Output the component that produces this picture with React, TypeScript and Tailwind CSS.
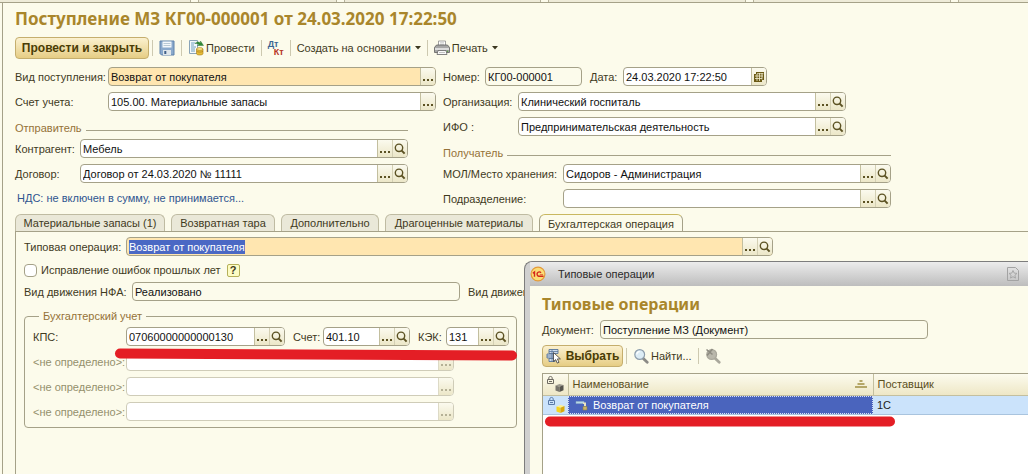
import React, { useEffect, useRef } from "react";
import clsx from "clsx";

function LensIcon() {
  return (
    <svg viewBox="0 0 12 12" className="size-3" fill="none" aria-hidden="true">
      <circle cx="5" cy="4.8" r="3.7" stroke="#5c5223" strokeWidth="1.4" />
      <path d="M7.7 7.6 10.6 10.6" stroke="#5c5223" strokeWidth="2" />
    </svg>
  );
}

function CalendarIcon() {
  return (
    <svg viewBox="0 0 12 12" className="size-3" aria-hidden="true">
      <path d="M3 1h8v8H9v2H1V3h2z" fill="#6b5a14" />
      <path d="M2 5h8M2 7.5h7M4 2.7h6.4M4 3v7M6.5 2v8M9 2v6.5" stroke="#f4efd0" strokeWidth=".8" />
    </svg>
  );
}

function SaveIcon() {
  return (
    <svg viewBox="0 0 16 16" className="size-4" aria-hidden="true">
      <path d="M1 1h14v14H2.5L1 13.5z" fill="#8aa9cc" stroke="#5f82ab" />
      <path d="M3.5 1.5h9v6h-9z" fill="#f4f8fb" />
      <path d="M4.5 3.5h7M4.5 5.5h7" stroke="#a9bccc" strokeWidth=".8" />
      <path d="M4 10h8v5H4z" fill="#dfe6ea" />
      <path d="M5.3 11h2v3h-2z" fill="#3f5f88" />
    </svg>
  );
}

function PostIcon() {
  return (
    <svg viewBox="0 0 16 16" className="size-4" aria-hidden="true">
      <path d="M1.5.5h8v13h-8z" fill="#f5f9fb" stroke="#8aa4b8" />
      <path d="M3 3h4M3 5h3M3 7h5M3 9h4M3 11h4" stroke="#6fa0bf" />
      <path d="M7 3.5c2-2 4-2 5.500-.5V1l3 4.500H9.500L11 4.200c-1.200-.8-2.500-.9-4-.7z" fill="#2f8a35" stroke="#1f6c28" strokeWidth=".4" />
      <path d="M8.500 9v4.500c0 1 1.300 1.500 3.200 1.500s3.300-.5 3.300-1.500V9z" fill="#e7bd3a" stroke="#a87d14" strokeWidth=".6" />
      <ellipse cx="11.750" cy="9" rx="3.200" ry="1.400" fill="#f9e48c" stroke="#a87d14" strokeWidth=".6" />
      <path d="M8.500 11.200c1 1.200 5.500 1.200 6.500 0" fill="none" stroke="#a87d14" strokeWidth=".7" />
    </svg>
  );
}

function PrinterIcon() {
  return (
    <svg viewBox="0 0 16 16" className="size-4" aria-hidden="true">
      <path d="M4.500 1h7v5h-7z" fill="#fff" stroke="#8b8b8b" strokeWidth=".8" />
      <path d="M6 2.800h4M6 4.300h4" stroke="#b2b2b2" strokeWidth=".7" />
      <path d="M2.500 5h11l2 2.500v5h-15v-5z" fill="#a6a6a6" stroke="#5f5f5f" strokeWidth=".8" />
      <path d="M1 8h14v2H1z" fill="#dcdcdc" />
      <path d="M4 10.500h8l1 4H3z" fill="#fafafa" stroke="#666" strokeWidth=".8" />
      <path d="M5 12.500h6" stroke="#aaa" strokeWidth=".7" />
      <circle cx="13.500" cy="11.200" r=".7" fill="#58a33d" />
    </svg>
  );
}

function PickIcon() {
  return (
    <svg viewBox="0 0 16 16" className="size-4" aria-hidden="true">
      <path d="M3 1.500h9v4H3zM1 6h8v4H1zM3 10.500h6v3H3z" fill="#cfdded" stroke="#58759a" strokeWidth=".9" />
      <path d="M3 3.500h9M1 8h8M6 1.500v12" stroke="#58759a" strokeWidth=".8" />
      <path d="M7.500 4.500v9l2.200-1.900 1.600 3.500 1.700-.8-1.600-3.400h3z" fill="#fff" stroke="#3a3a3a" strokeWidth=".8" />
    </svg>
  );
}

function FindIcon({ off = false }: { off?: boolean }) {
  return (
    <svg viewBox="0 0 16 16" className="size-4" aria-hidden="true">
      <path d="m10 10.300 4.200 4" stroke={off ? "#aaa89c" : "#8b8a86"} strokeWidth="2.800" strokeLinecap="round" />
      <circle cx="6.700" cy="6.500" r="4.900" fill={off ? "#b9b7ab" : "#dcecf5"} stroke={off ? "#aaa89c" : "#8d9dab"} strokeWidth="1.200" />
      {off ? (
        <path d="m1.500 1.500 6 5M7.500 1 2 7.500" stroke="#8e8c82" strokeWidth="1.600" />
      ) : (
        <path d="M3.800 6.500c0-1.800 1.200-2.900 2.900-2.900" fill="none" stroke="#fff" strokeWidth="1.200" />
      )}
    </svg>
  );
}

function LogoIcon() {
  return (
    <svg viewBox="0 0 16 16" className="size-4" aria-hidden="true">
      <circle cx="8" cy="8" r="6.900" fill="#fbdc75" stroke="#e39a3a" strokeWidth="1.200" />
      <path d="M2.800 7.300 4.500 6v4.800M11 6.700a2.200 2.200 0 1 0-2.200 3.500H13.500" fill="none" stroke="#d4261c" strokeWidth="1.400" />
      <path d="M9.800 8.600H13" stroke="#d4261c" strokeWidth=".6" />
    </svg>
  );
}

function LockCubeIcon({ active = false }: { active?: boolean }) {
  const body = active ? "#f5d31f" : "#77746c";
  const side = active ? "#d9a90d" : "#55534d";
  const lock = active ? "#5b7ba8" : "#6e6b62";
  return (
    <svg viewBox="0 0 18 18" className="size-[18px]" fill="none" aria-hidden="true">
      <path d="M1.500 4.500h6v4h-6z" stroke={lock} />
      <path d="M2.800 4.500V2.800c0-1.800 3.400-1.800 3.400 0v1.700M3 6.500h3" stroke={lock} />
      <path d="m9.500 10.500 4-1.500 4 1-4 1.700z" fill={active ? "#fff08a" : "#9b988e"} />
      <path d="m9.500 10.500 4 1.200V17l-4-1.500z" fill={body} />
      <path d="m17.500 10-4 1.700V17l4-1.700z" fill={side} />
    </svg>
  );
}

function ItemIcon() {
  return (
    <svg viewBox="0 0 14 12" className="h-3 w-3.5 shrink-0" aria-hidden="true">
      <path d="M1 2.500h8v2H1z" fill="#b9d9e6" stroke="#8fb0c4" strokeWidth=".5" />
      <path d="M8 3.500h3v4H9V5H8z" fill="#e8e3c0" />
      <path d="M8 7.500h4V11H8z" fill="#c9b469" stroke="#8a7f4a" strokeWidth=".6" />
    </svg>
  );
}

function FavoriteIcon() {
  return (
    <svg viewBox="0 0 14 14" className="size-3.5" fill="none" aria-hidden="true">
      <path d="M1.500.5h8l3 3v10h-11z" stroke="#a3a3a3" />
      <path d="m7 3.500 1.200 2.600 2.800.3-2.100 1.900.6 2.800L7 9.700l-2.500 1.400.6-2.800L3 6.400l2.800-.3z" stroke="#a3a3a3" strokeWidth=".9" />
    </svg>
  );
}

type FieldProps = {
  id: string;
  label: string;
  value?: string;
  labelClass?: string;
  boxClass?: string;
  tone?: "white" | "amber" | "plain";
  dots?: boolean;
  lens?: boolean;
  calendar?: boolean;
  disabled?: boolean;
  selected?: boolean;
};

const sideButton =
  "flex w-[15px] shrink-0 items-center justify-center border-l bg-linear-to-b from-[#fbfaee] to-[#ece7c8]";

function Field({
  id,
  label,
  value = "",
  labelClass,
  boxClass,
  tone = "white",
  dots,
  lens,
  calendar,
  disabled,
  selected,
}: FieldProps) {
  const input = useRef<HTMLInputElement>(null);
  useEffect(() => {
    if (selected && input.current) {
      input.current.focus();
      input.current.select();
    }
  }, [selected]);

  return (
    <div className="flex h-[19px] items-center">
      <label htmlFor={id} className={clsx("shrink-0 whitespace-nowrap", disabled && "text-[#94906c]", labelClass)}>
        {label}
      </label>
      <div
        className={clsx(
          "flex h-[19px] min-w-0 overflow-hidden rounded border",
          disabled ? "border-[#cfccb8]" : "border-[#a5a188]",
          tone === "white" && "bg-white",
          tone === "amber" && "bg-[#ffe6b0]",
          tone === "plain" && "bg-[#fcfbeb]",
          boxClass,
        )}
      >
        <input
          ref={input}
          id={id}
          defaultValue={value}
          disabled={disabled}
          readOnly={tone === "plain"}
          className="min-w-0 flex-1 bg-transparent pl-0.5 text-[#111] outline-none selection:bg-[#4a68c4] selection:text-white"
        />
        {dots && (
          <button
            type="button"
            aria-label={`${label} выбрать`}
            disabled={disabled}
            className={clsx(sideButton, disabled ? "border-[#dddac6]" : "border-[#c3bf9f]")}
          >
            <svg viewBox="0 0 12 12" className="size-3" aria-hidden="true">
              <path d="M1 8h2v2H1zM5 8h2v2H5zM9 8h2v2H9z" fill={disabled ? "#b5b196" : "#5c5223"} />
            </svg>
          </button>
        )}
        {lens && (
          <button type="button" aria-label={`${label} открыть`} className={clsx(sideButton, "border-[#d4d0b4]")}>
            <LensIcon />
          </button>
        )}
        {calendar && (
          <button type="button" aria-label={`${label} календарь`} className={clsx(sideButton, "border-[#c3bf9f]")}>
            <CalendarIcon />
          </button>
        )}
      </div>
    </div>
  );
}

function GroupTitle({ children }: { children: React.ReactNode }) {
  return (
    <div className="flex items-center gap-1 text-[#957238]">
      <h2>{children}</h2>
      <div className="mt-1 h-px flex-1 bg-[#a5a188]" />
    </div>
  );
}

function Separator() {
  return <div className="h-4 w-px bg-[#cdc9b0]" />;
}

function Caret() {
  return (
    <svg viewBox="0 0 6 4" className="h-1 w-1.5" aria-hidden="true">
      <path d="M0 0h6L3 3.500z" fill="#3c3820" />
    </svg>
  );
}

const goldButton =
  "flex h-[22px] items-center justify-center rounded border border-[#c5ae6d] bg-linear-to-b from-[#fbf1cf] to-[#e6cd84] text-xs font-bold text-[#4a3c05]";

const tabs = [
  { title: "Материальные запасы (1)", width: "w-[150px]" },
  { title: "Возвратная тара", width: "w-[104px]" },
  { title: "Дополнительно", width: "w-[98px]" },
  { title: "Драгоценные материалы", width: "w-[148px]" },
  { title: "Бухгалтерская операция", width: "w-[144px]", active: true },
];

function Toolbar() {
  return (
    <div className="flex h-[22px] items-center gap-[3px]">
      <button type="button" className={clsx(goldButton, "w-[134px]")}>
        Провести и закрыть
      </button>
      <div className="flex items-center gap-1.5">
        <Separator />
        <button type="button" aria-label="Записать">
          <SaveIcon />
        </button>
        <Separator />
        <button type="button" className="flex items-center gap-0.5">
          <PostIcon />
          Провести
        </button>
        <Separator />
        <button type="button" aria-label="Дт Кт" className="w-4 text-[9px] leading-2 font-bold">
          <span className="block text-left text-[#3b6592]">Дт</span>
          <span className="block text-right text-[#b63324]">Кт</span>
        </button>
        <Separator />
        <button type="button" className="flex items-center gap-1">
          Создать на основании
          <Caret />
        </button>
        <Separator />
        <button type="button" className="flex items-center gap-1">
          <span className="flex items-center gap-0.5">
            <PrinterIcon />
            Печать
          </span>
          <Caret />
        </button>
      </div>
    </div>
  );
}

function Header() {
  return (
    <div className="flex gap-[7px]">
      <div className="flex w-[421px] shrink-0 flex-col">
        <div className="flex flex-col gap-1.5">
          <Field id="kind" label="Вид поступления:" value="Возврат от покупателя" labelClass="w-[93px]" boxClass="flex-1" tone="amber" dots />
          <Field id="account" label="Счет учета:" value="105.00. Материальные запасы" labelClass="w-[93px]" boxClass="flex-1" dots />
        </div>
        <section className="mt-2.5 w-[393px]">
          <GroupTitle>Отправитель</GroupTitle>
          <div className="mt-1 flex flex-col gap-1.5">
            <Field id="partner" label="Контрагент:" value="Мебель" labelClass="w-[65px]" boxClass="flex-1" dots lens />
            <Field id="contract" label="Договор:" value="Договор от 24.03.2020 № 11111" labelClass="w-[65px]" boxClass="flex-1" dots lens />
          </div>
        </section>
        <a href="#vat" className="mt-2 self-start pl-0.5 text-[#2f5590]">
          НДС: не включен в сумму, не принимается...
        </a>
      </div>
      <div className="flex min-w-0 flex-1 flex-col">
        <div className="flex flex-col gap-1.5">
          <div className="flex gap-2">
            <Field id="number" label="Номер:" value="КГ00-000001" labelClass="w-[42px]" boxClass="w-[97px]" tone="plain" />
            <Field id="date" label="Дата:" value="24.03.2020 17:22:50" labelClass="w-[33px]" boxClass="w-[144px]" calendar />
          </div>
          <Field id="organization" label="Организация:" value="Клинический госпиталь" labelClass="w-[75px]" boxClass="w-[328px]" dots lens />
          <Field id="ifo" label="ИФО :" value="Предпринимательская деятельность" labelClass="w-[75px]" boxClass="w-[328px]" dots lens />
        </div>
        <section className="mt-2.5 w-[448px]">
          <GroupTitle>Получатель</GroupTitle>
          <div className="mt-1 flex flex-col gap-1.5">
            <Field id="storage" label="МОЛ/Место хранения:" value="Сидоров - Администрация" labelClass="w-[120px]" boxClass="flex-1" dots lens />
            <Field id="department" label="Подразделение:" labelClass="w-[120px]" boxClass="flex-1" dots lens />
          </div>
        </section>
      </div>
    </div>
  );
}

function OperationPanel() {
  return (
    <div className="flex flex-1 flex-col border-t border-l border-[#a5a188] pt-[5px] pl-2">
      <Field id="operation" label="Типовая операция:" value="Возврат от покупателя" labelClass="w-[102px]" boxClass="w-[647px]" tone="amber" dots lens selected />
      <div className="mt-1.5 flex h-4 items-center">
        <input
          id="fix"
          type="checkbox"
          className="size-[13px] appearance-none rounded-sm border border-[#a5a188] bg-white checked:bg-[#a5a188]"
        />
        <label htmlFor="fix" className="pl-1">
          Исправление ошибок прошлых лет
        </label>
        <button
          type="button"
          className="ml-1.5 flex size-[13px] items-center justify-center rounded-xs border border-[#b5b05a] bg-[#fdfcc4] font-bold"
        >
          ?
        </button>
      </div>
      <div className="mt-1 flex gap-2">
        <Field id="movement" label="Вид движения НФА:" value="Реализовано" labelClass="w-[108px]" boxClass="w-[328px]" tone="plain" />
        <Field id="movement-kind" label="Вид движения:" value="" labelClass="w-[96px]" boxClass="w-[200px]" tone="plain" />
      </div>
      <fieldset className="mt-2 w-[493px] rounded border border-[#a5a188] pr-[7px] pb-1.5 pl-2">
        <legend className="ml-1.5 px-1 text-[#957238]">Бухгалтерский учет</legend>
        <div className="mt-1 flex gap-2">
          <Field id="kps" label="КПС:" value="07060000000000130" labelClass="w-[93px]" boxClass="w-[159px]" dots lens />
          <Field id="acc" label="Счет:" value="401.10" labelClass="w-[30px]" boxClass="w-[87px]" dots lens />
          <Field id="kek" label="КЭК:" value="131" labelClass="w-[28px]" boxClass="w-[63px]" dots lens />
        </div>
        <div className="mt-1.5 flex flex-col gap-1.5">
          {["first", "second", "third"].map((id) => (
            <Field key={id} id={id} label="<не определено>:" labelClass="w-[93px]" boxClass="w-[328px]" dots disabled />
          ))}
        </div>
      </fieldset>
    </div>
  );
}

function OperationsWindow() {
  return (
    <section className="absolute top-[261px] right-0 bottom-0 left-[524px] flex flex-col overflow-hidden rounded-tl-lg border-t border-l border-[#7d7d7d] bg-[#d0d0d0] pl-[5px]">
      <header className="flex h-6 items-center bg-linear-to-b from-[#ececec] to-[#bdbdbd] pr-2">
        <LogoIcon />
        <h2 className="flex-1 pl-3 text-[#2b2b2b]">Типовые операции</h2>
        <button type="button" aria-label="В избранное">
          <FavoriteIcon />
        </button>
      </header>
      <div className="flex flex-1 flex-col bg-[#fcfbeb] pt-2 pl-3">
        <h3 className="font-['Noto_Sans',sans-serif] text-base leading-5 font-bold text-[#a9862b]">Типовые операции</h3>
        <div className="mt-1.5">
          <Field id="document" label="Документ:" value="Поступление МЗ (Документ)" labelClass="w-[58px]" boxClass="w-[328px]" tone="plain" />
        </div>
        <div className="mt-1.5 flex items-center gap-[3px]">
          <button type="button" className={clsx(goldButton, "w-[81px] gap-1")}>
            <PickIcon />
            Выбрать
          </button>
          <div className="flex items-center gap-1.5">
            <Separator />
            <button type="button" className="flex items-center gap-0.5">
              <FindIcon />
              Найти...
            </button>
            <Separator />
            <button type="button" aria-label="Отменить поиск">
              <FindIcon off />
            </button>
          </div>
        </div>
        <div className="mt-1.5 flex-1 border-t border-l border-[#a5a188] bg-white">
          <table className="w-full table-fixed border-collapse text-left">
            <thead>
              <tr className="h-[21px] bg-linear-to-b from-[#fcfbee] to-[#eee7c6] text-[#5b4f1d]">
                <th className="w-[25px] border-r border-b border-[#c3bf9f] p-0">
                  <div className="flex justify-center">
                    <LockCubeIcon />
                  </div>
                </th>
                <th className="w-[305px] border-r border-b border-[#c3bf9f] p-0 font-normal">
                  <div className="flex items-center justify-between pr-1.5 pl-1">
                    Наименование
                    <svg viewBox="0 0 12 8" className="h-2 w-3" aria-hidden="true">
                      <path d="M4.500 0h3v2h-3zM2.500 3h7v2h-7zM0 6h12v2H0z" fill="#b5a768" />
                    </svg>
                  </div>
                </th>
                <th className="border-b border-[#c3bf9f] p-0 pl-1 font-normal">Поставщик</th>
              </tr>
            </thead>
            <tbody>
              <tr className="h-[19px] bg-[#cbe3fb]">
                <td className="border-b border-[#a9c4de] p-0">
                  <div className="flex h-[18px] justify-center">
                    <LockCubeIcon active />
                  </div>
                </td>
                <td className="border-b border-[#a9c4de] p-0">
                  <div className="flex h-[18px] items-center gap-1 border border-dotted border-[#d8dff5] bg-[#4a64bd] pl-1.5 text-white">
                    <ItemIcon />
                    Возврат от покупателя
                  </div>
                </td>
                <td className="border-b border-[#a9c4de] p-0 pl-1 text-[#222]">1С</td>
              </tr>
            </tbody>
          </table>
        </div>
      </div>
    </section>
  );
}

export default function App() {
  return (
    <main className="relative flex min-h-screen flex-col overflow-hidden bg-[#fcfbeb] font-['Liberation_Sans',Arial,sans-serif] text-[11px] leading-[14px] text-[#3f3a1d]">
      <div className="flex h-[3px] gap-[7px] border-b border-[#a5a188]">
        <div className="w-[191px] border-r border-[#b5b19a] bg-[#eeebd8]" />
        <div className="w-[139px] border-x border-[#b5b19a] bg-[#eeebd8]" />
        <div className="w-[197px] border-x border-[#b5b19a] bg-[#eeebd8]" />
        <div className="w-[198px] border-x border-[#b5b19a] bg-[#eeebd8]" />
        <div className="w-[198px] border-x border-[#b5b19a] bg-[#eeebd8]" />
        <div className="flex-1 border-l border-[#b5b19a] bg-[#eeebd8]" />
      </div>
      <div className="ml-0.5 flex flex-1 flex-col border-l border-[#a5a188] pt-1.5 pl-3">
        <h1 className="font-['Noto_Sans',sans-serif] text-[17px] leading-5 font-bold text-[#a9862b]">
          Поступление МЗ КГ00-000001 от 24.03.2020 17:22:50
        </h1>
        <div className="mt-2">
          <Toolbar />
        </div>
        <div className="mt-2">
          <Header />
        </div>
        <div role="tablist" className="mt-1.5 flex gap-1.5">
          {tabs.map((tab) => (
            <button
              key={tab.title}
              type="button"
              role="tab"
              aria-selected={!!tab.active}
              className={clsx(
                "h-[17px] rounded-t-md border border-b-0 whitespace-nowrap",
                tab.width,
                tab.active ? "-mb-px h-[18px] border-[#a5a188] border-t-[#c9b860] bg-[#fcfbeb]" : "border-[#bfbba2] bg-[#eae8d8]",
              )}
            >
              {tab.title}
            </button>
          ))}
        </div>
        <OperationPanel />
      </div>
      <OperationsWindow />
      <svg className="pointer-events-none absolute top-[346px] left-[114px] h-4 w-[405px]" viewBox="0 0 405 16" aria-hidden="true">
        <path d="M6 7.500 398 9.500" stroke="#e41e25" strokeWidth="10" strokeLinecap="round" />
      </svg>
      <svg className="pointer-events-none absolute top-[414px] left-[544px] h-4 w-[353px]" viewBox="0 0 353 16" aria-hidden="true">
        <path d="M6 7.500H346" stroke="#e41e25" strokeWidth="10" strokeLinecap="round" />
      </svg>
    </main>
  );
}
